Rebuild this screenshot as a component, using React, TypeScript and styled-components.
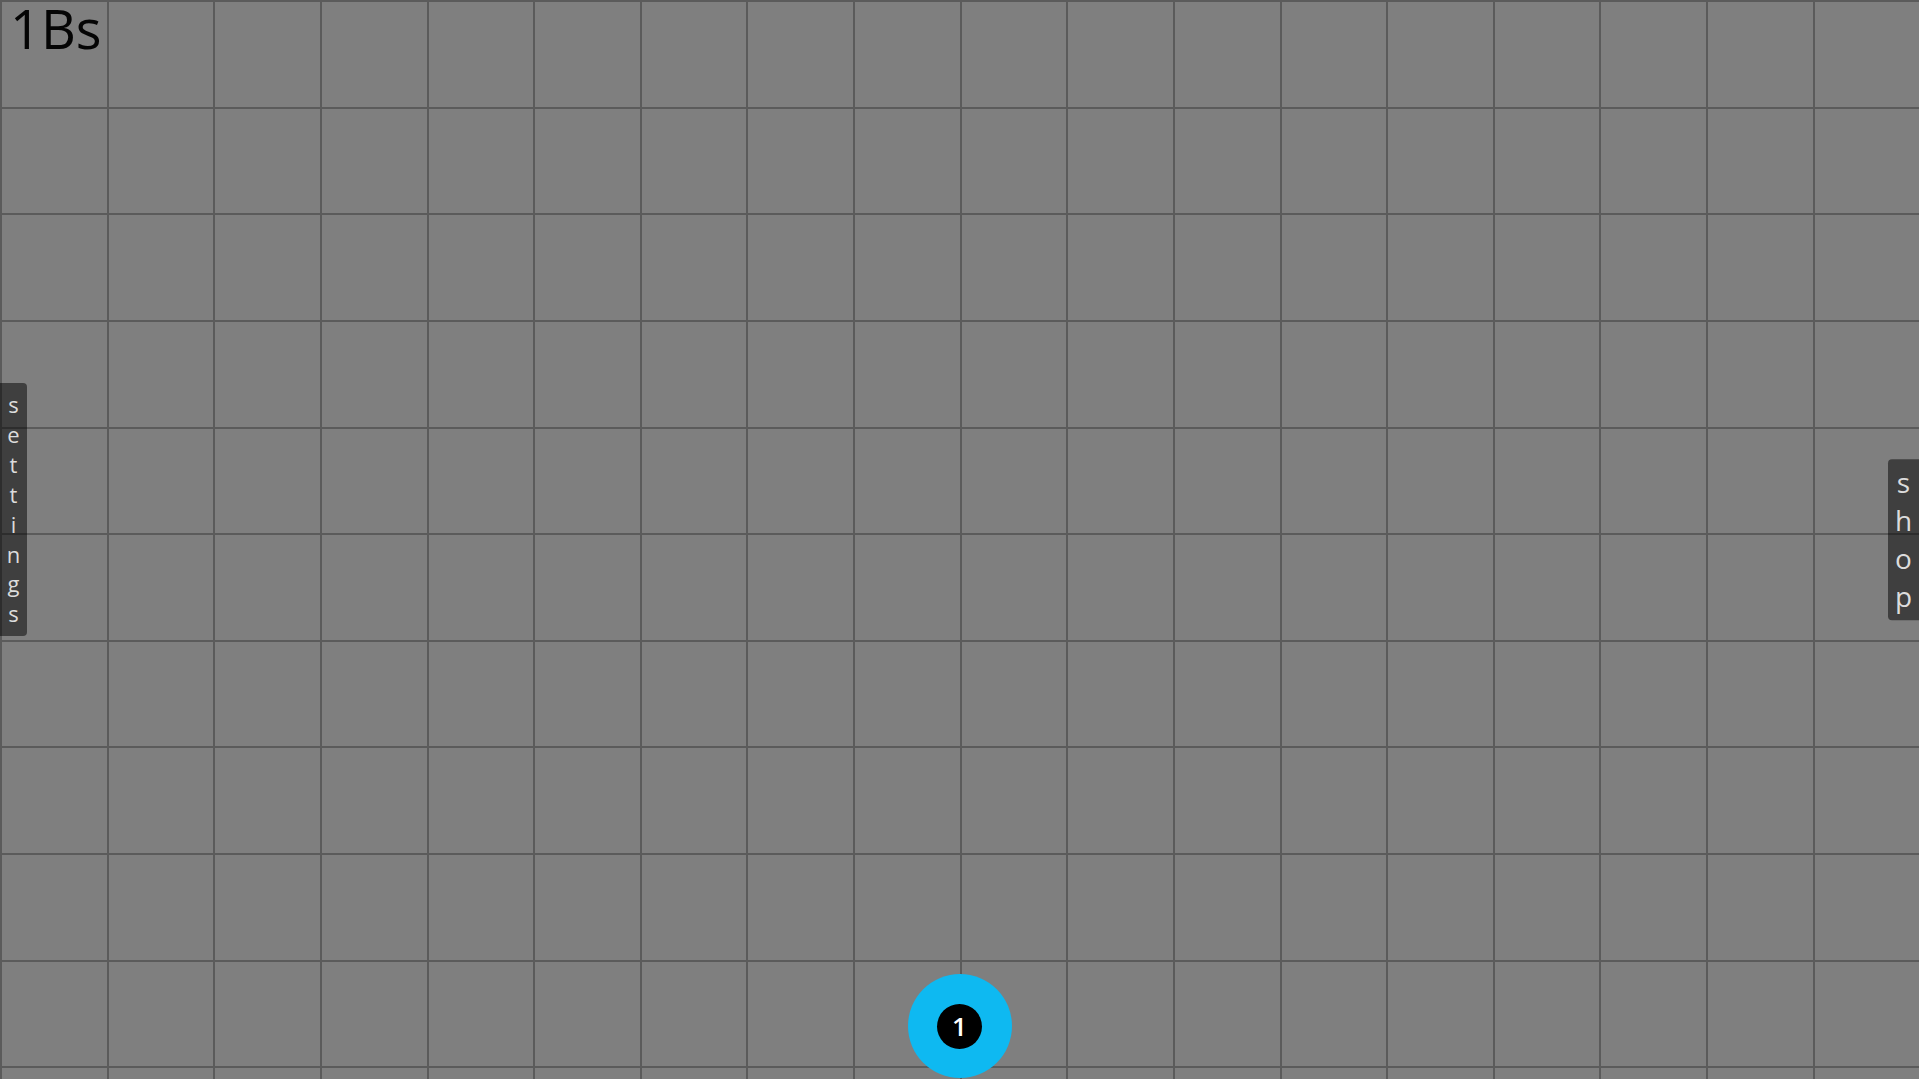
import React from 'react'
import styled, { createGlobalStyle } from 'styled-components'

const GlobalStyle = createGlobalStyle`
  html, body {
    margin: 0;
    padding: 0;
    overflow: hidden;
    background: #5b5b5b;
    font-family: "Open Sans", "Noto Sans", sans-serif;
  }
`

const COLS = 18
const ROWS = 11

const Stage = styled.div`
  position: relative;
  width: 100vw;
  height: 100vh;
  overflow: hidden;
`

const Board = styled.div`
  display: grid;
  grid-template-columns: repeat(${COLS}, 1fr);
  gap: 2px;
  padding: 2px 0 0 2px;
  background: #5b5b5b;
`

const Cell = styled.div`
  aspect-ratio: 1 / 1;
  background: #7f7f7f;
`

// score readout, top-left over the board
const Score = styled.div`
  position: absolute;
  top: 1px;
  left: 10px;
  font-size: 54px;
  color: #050505;
  line-height: 1;
`

const SideTab = styled.div<{ $side: 'left' | 'right'; $size: number }>`
  position: absolute;
  ${p => (p.$side === 'left' ? 'left: 0;' : 'right: 0;')}
  background: rgba(0, 0, 0, 0.5);
  color: #dcdcdc;
  font-size: ${p => p.$size}px;
  line-height: 1.36;
  text-align: center;
  border-radius: ${p => (p.$side === 'left' ? '0 4px 4px 0' : '4px 0 0 4px')};
  display: flex;
  flex-direction: column;
  align-items: center;
  cursor: pointer;
`

const Settings = styled(SideTab)`
  top: 383px;
  width: 27px;
  padding: 7px 0;
`

const Shop = styled(SideTab)`
  top: 50%;
  transform: translateY(-50%);
  width: 31px;
  padding: 4px 0 5px;
`

const Player = styled.div`
  position: absolute;
  bottom: 1px;
  left: 50%;
  transform: translateX(-50%);
  width: 104px;
  height: 104px;
  border-radius: 50%;
  background: #0eb9f1;
  display: flex;
  align-items: center;
  justify-content: center;
`

const Core = styled.div`
  width: 45px;
  height: 45px;
  border-radius: 50%;
  background: #000;
  color: #fff;
  font-size: 26px;
  font-weight: 600;
  display: flex;
  align-items: center;
  justify-content: center;
  line-height: 1;
`

const letters = (word: string) => word.split('').map((c, i) => <span key={i}>{c}</span>)

const App = () => {
  return (
    <Stage>
      <GlobalStyle />
      <Board>
        {Array.from({ length: COLS * ROWS }).map((_, i) => (
          <Cell key={i} />
        ))}
      </Board>
      <Score>1Bs</Score>
      <Settings $side="left" $size={22}>{letters('settings')}</Settings>
      <Shop $side="right" $size={28}>{letters('shop')}</Shop>
      <Player>
        <Core>1</Core>
      </Player>
    </Stage>
  )
}

export default App
